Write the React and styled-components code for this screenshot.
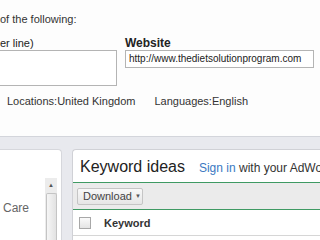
import styled, { createGlobalStyle } from "styled-components";

const Global = createGlobalStyle`
  html, body {
    margin: 0;
    padding: 0;
    background: #fdfdfd;
  }
  body {
    font-family: "Liberation Sans", Arial, sans-serif;
    color: #333;
  }
`;

const Page = styled.div`
  width: 320px;
  height: 240px;
  overflow: hidden;
  display: flex;
  flex-direction: column;
`;

const Top = styled.div`
  height: 136px;
  background: #fdfdfd;
  display: flex;
  flex-direction: column;
`;

const Intro = styled.div`
  font-size: 11px;
  line-height: 14px;
  margin-top: 12px;
  color: #333;
`;

const FormRow = styled.div`
  display: flex;
  margin-top: 10px;
`;

const Field = styled.div`
  display: flex;
  flex-direction: column;
  width: ${(p) => p.$width}px;
  margin-left: ${(p) => p.$left || 0}px;
`;

const Label = styled.div`
  font-size: ${(p) => (p.$bold ? 12 : 11)}px;
  line-height: 14px;
  font-weight: ${(p) => (p.$bold ? 700 : 400)};
  color: #222;
  height: 14px;
`;

const TextArea = styled.div`
  height: 34px;
  border: 1px solid #b4b4b4;
  border-left: none;
  background: #fff;
`;

const UrlBox = styled.div`
  height: 16px;
  border: 1px solid #b4b4b4;
  background: #fff;
  font-size: 10px;
  line-height: 16px;
  padding-left: 3px;
  color: #222;
  white-space: nowrap;
`;

const Targets = styled.div`
  display: flex;
  gap: 19px;
  margin-top: 9px;
  padding-left: 7px;
  font-size: 11px;
  line-height: 13px;
  color: #333;
`;

const Lower = styled.div`
  flex: 1;
  border-top: 1px solid #d3d5db;
  background: #e8e9ee;
  display: flex;
  gap: 10px;
  padding-top: 12px;
`;

const SidePanel = styled.div`
  width: 61px;
  background: #fff;
  border: 1px solid #d6d7dc;
  border-left: none;
  border-bottom: none;
  border-radius: 0 4px 0 0;
  position: relative;
`;

const SideItem = styled.div`
  position: absolute;
  left: 3px;
  top: 51px;
  font-size: 12px;
  color: #666;
`;

const Scrollbar = styled.div`
  position: absolute;
  left: 45px;
  top: 28px;
  width: 12px;
  bottom: 0;
  background: #ececec;
  display: flex;
  flex-direction: column;
  align-items: center;
`;

const ScrollArrow = styled.div`
  height: 15px;
  font-size: 6px;
  line-height: 15px;
  color: #555;
`;

const Thumb = styled.div`
  flex: 1;
  width: 9px;
  background: linear-gradient(90deg, #f6f6f6, #e2e2e2);
  border: 1px solid #c4c4c4;
  border-bottom: none;
  border-radius: 2px 2px 0 0;
`;

const MainPanel = styled.div`
  flex: 1;
  background: #fff;
  border: 1px solid #d0d1d6;
  border-right: none;
  border-bottom: none;
  border-radius: 4px 0 0 0;
  display: flex;
  flex-direction: column;
  overflow: hidden;
`;

const Heading = styled.div`
  display: flex;
  align-items: baseline;
  gap: 14px;
  padding: 8px 0 0 7px;
  height: 24px;
  white-space: nowrap;
  border-bottom: 1px solid #3f9a63;
`;

const Title = styled.span`
  font-size: 16px;
  color: #222;
`;

const Note = styled.span`
  font-size: 12px;
  color: #333;
`;

const Link = styled.span`
  color: #3b79c2;
`;

const Toolbar = styled.div`
  height: 26px;
  background: #ebebeb;
  border-bottom: 1px solid #3f9a63;
  display: flex;
  align-items: center;
  padding-left: 4px;
`;

const Button = styled.div`
  height: 17px;
  width: 66px;
  box-sizing: border-box;
  border: 1px solid #c5c5c5;
  border-radius: 2px;
  background: linear-gradient(#f8f8f8, #e6e6e6);
  font-size: 11px;
  line-height: 15px;
  color: #444;
  padding-left: 5px;
  white-space: nowrap;
`;

const Caret = styled.span`
  font-size: 6px;
  color: #555;
  margin-left: 3px;
  vertical-align: 2px;
`;

const HeaderRow = styled.div`
  height: 25px;
  border-bottom: 1px solid #d6d6d6;
  display: flex;
  align-items: center;
  padding-left: 6px;
  gap: 13px;
`;

const Check = styled.div`
  width: 10px;
  height: 10px;
  border: 1px solid #a8a8a8;
  background: linear-gradient(#fafafa, #e4e4e4);
`;

const ColName = styled.div`
  font-size: 11px;
  font-weight: 700;
  color: #333;
`;

export default function App() {
  return (
    <Page>
      <Global />
      <Top>
        <Intro>of the following:</Intro>
        <FormRow>
          <Field $width={117}>
            <Label>er line)</Label>
            <TextArea />
          </Field>
          <Field $width={189} $left={8}>
            <Label $bold>Website</Label>
            <UrlBox>http://www.thedietsolutionprogram.com</UrlBox>
          </Field>
        </FormRow>
        <Targets>
          <span>Locations:United Kingdom</span>
          <span>Languages:English</span>
        </Targets>
      </Top>
      <Lower>
        <SidePanel>
          <SideItem>Care</SideItem>
          <Scrollbar>
            <ScrollArrow>▲</ScrollArrow>
            <Thumb />
          </Scrollbar>
        </SidePanel>
        <MainPanel>
          <Heading>
            <Title>Keyword ideas</Title>
            <Note>
              <Link>Sign in</Link> with your AdWords account
            </Note>
          </Heading>
          <Toolbar>
            <Button>
              Download<Caret>▼</Caret>
            </Button>
          </Toolbar>
          <HeaderRow>
            <Check />
            <ColName>Keyword</ColName>
          </HeaderRow>
        </MainPanel>
      </Lower>
    </Page>
  );
}
